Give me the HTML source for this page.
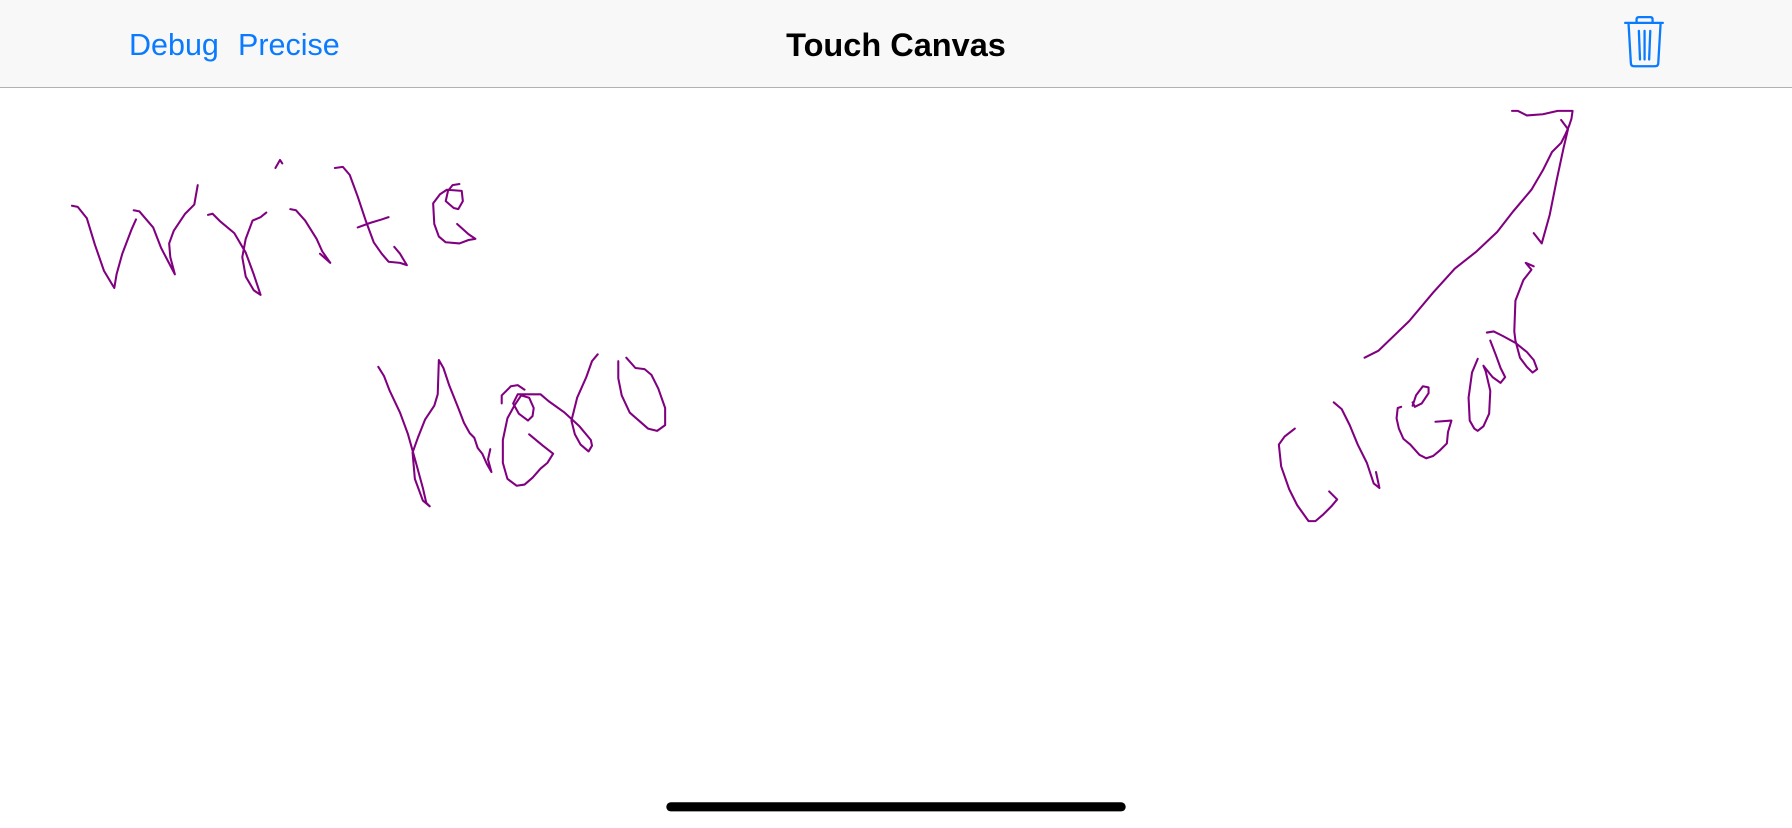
<!DOCTYPE html>
<html><head><meta charset="utf-8"><style>
html,body{margin:0;padding:0;width:1792px;height:828px;overflow:hidden;background:#fff;font-family:"Liberation Sans",sans-serif}
#bar{position:absolute;left:0;top:0;width:1792px;height:88px;background:#f8f8f8;border-bottom:1px solid #b2b2b2;box-sizing:border-box}
.btn{position:absolute;top:28px;font-size:30.5px;color:#0a7aff}
#title{position:absolute;top:27px;left:0;width:1792px;text-align:center;font-size:32.5px;font-weight:bold;color:#000}
svg{position:absolute;left:0;top:0}
</style></head><body>
<div id="bar">
<span class="btn" style="left:129px">Debug</span>
<span class="btn" style="left:238px">Precise</span>
<div id="title">Touch Canvas</div>
</div>
<svg width="1792" height="828" viewBox="0 0 1568 724.5">
<g fill="none" stroke="#0a7aff" stroke-width="2" stroke-linecap="round" stroke-linejoin="round">
<path d="M1422 20 H1455"/>
<path d="M1432 20 V17 Q1432 15 1434 15 H1444 Q1446 15 1446 17 V20"/>
<path d="M1425 21 L1427 55 Q1427 58 1430 58 H1448 Q1451 58 1451 55 L1453 21"/>
<path d="M1434 27 L1435 52 M1439 27 V52 M1444 27 L1443 52"/>
</g>
<g fill="none" stroke="#800080" stroke-width="1.8" stroke-linecap="round" stroke-linejoin="round">
<path d="M63 180 L68 181 L76 191 L83 214 L91 237 L100 252 L102 240 L107 222 L115 201 L119 192"/>
<path d="M117 184 L122 185 L134 199 L141 217 L153 240 L149 225 L148 213 L152 202 L162 187 L170 179 L173 162"/>
<path d="M182 188 L186 187 L193 194 L205 204 L215 221 L222 240 L228 258 L222 254 L215 242 L212 225 L215 209 L221 193 L228 190 L233 186"/>
<path d="M254 183 L259 184 L267 193 L277 209 L282 220 L289 230 L280 222"/>
<path d="M241 147 L245 140 L247 143"/>
<path d="M293 147 L300 146 L306 153 L313 172 L320 193 L327 212 L334 222 L340 229 L350 230 L356 232 L350 222 L345 216"/>
<path d="M313 199 L324 195 L334 192 L340 190"/>
<path d="M400 196 L410 205 L416 209 L410 210 L402 213 L390 212 L384 207 L380 196 L379 178 L385 170 L391 166 L404 167 L405 176 L401 183 L397 182 L390 176 L392 167 L396 162 L402 161"/>
<path d="M331 321 L336 329 L341 342 L350 361 L357 380 L364 405 L370 427 L373 440 L376 443 L370 438 L363 419 L361 396 L366 382 L372 367 L380 355 L383 345 L384 315 L388 322 L393 337 L401 357 L406 370 L411 379 L415 383 L418 392 L422 397 L426 406 L430 413 L427 402 L429 393"/>
<path d="M463 380 L475 390 L484 397 L479 405 L473 410 L466 418 L459 424 L452 425 L444 419 L440 405 L440 385 L444 366 L450 355 L456 346 L463 348 L467 357 L466 364 L462 368 L454 362 L449 353 L453 345 L461 345 L473 345 L480 351 L494 361 L507 373 L517 385 L518 390 L515 395 L508 389 L503 380 L500 368 L505 348 L513 330 L518 316 L523 310"/>
<path d="M439 353 L439 346 L447 338 L453 337 L459 341"/>
<path d="M541 316 L541 331 L544 346 L551 361 L559 368 L567 375 L575 377 L582 372 L582 357 L576 340 L570 328 L564 323 L556 322 L548 313"/>
<path d="M1194 313 L1206 307 L1233 281 L1254 256 L1273 235 L1292 220 L1310 203 L1324 185 L1340 166 L1350 149 L1358 133 L1366 125 L1370 117 L1373 110 L1375 104 L1376 97 L1363 97 L1350 100 L1336 101 L1328 97 L1323 97"/>
<path d="M1366 105 L1372 113 L1368 130 L1362 158 L1356 188 L1349 213 L1342 204"/>
<path d="M1133 375 L1124 382 L1119 389 L1121 408 L1128 428 L1135 442 L1145 456 L1151 456 L1158 450 L1165 443 L1170 437 L1163 430"/>
<path d="M1167 352 L1174 358 L1181 372 L1188 389 L1196 405 L1202 423 L1207 427 L1204 413"/>
<path d="M1236 355 L1239 346 L1245 338 L1250 339 L1250 344 L1244 353 L1238 356 L1236 352"/>
<path d="M1226 356 L1223 357 L1222 366 L1224 375 L1228 384 L1234 389 L1242 398 L1248 401 L1254 399 L1260 394 L1266 388 L1267 378 L1270 368 L1256 369"/>
<path d="M1293 314 L1288 326 L1285 348 L1286 368 L1290 375 L1293 377 L1298 373 L1303 362 L1304 342 L1300 325 L1298 320 L1306 330 L1313 335 L1317 330 L1313 322 L1309 311 L1304 298"/>
<path d="M1301 291 L1307 290 L1315 294 L1326 300 L1336 308 L1342 315 L1345 323 L1341 326 L1336 321 L1330 313 L1326 298 L1325 290 L1326 263 L1333 245 L1340 236 L1335 230 L1342 233"/>
</g>
<rect x="583" y="702" width="402" height="8" rx="4" fill="#000"/>
</svg>
</body></html>
